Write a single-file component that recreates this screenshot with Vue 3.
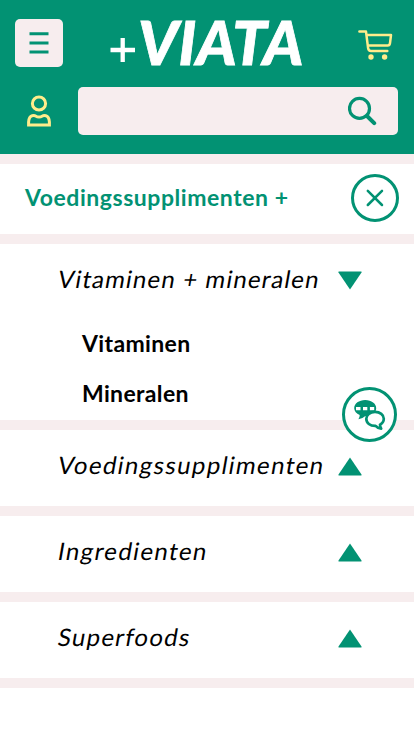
<script setup>
import { ref } from 'vue'

const categories = ref([
  { name: 'Vitaminen + mineralen', slug: 'minerals', open: true, items: ['Vitaminen', 'Mineralen'] },
  { name: 'Voedingssupplimenten', slug: 'supplements', open: false, items: [] },
  { name: 'Ingredienten', slug: 'ingredients', open: false, items: [] },
  { name: 'Superfoods', slug: 'superfoods', open: false, items: [] },
])
</script>

<template>
  <div class="page">
    <header class="header">
      <div class="top-row">
        <button class="menu-button" aria-label="Menu">
          <svg width="20" height="24" viewBox="0 0 20 24">
            <path d="M0.5 2.8h19M0.5 12h19M0.5 21h19" stroke="#029273" stroke-width="3" />
          </svg>
        </button>
        <svg class="logo" width="204" height="82" viewBox="0 -17 204 82">
          <path d="M0.5 31h24.5M12.7 19v24" stroke="#fff" stroke-width="4.3" />
          <text class="logo-text" x="28" y="45.7" textLength="165.5" lengthAdjust="spacingAndGlyphs">VIATA</text>
        </svg>
        <svg class="cart" width="36" height="32" viewBox="0 0 36 32" fill="none" stroke="#ffec8b" stroke-width="2.5" stroke-linecap="round" stroke-linejoin="round">
          <path d="M1.4 2.6H8L10.1 19.2Q10.5 22 13 22H29.3M8.5 6H33L32 14.2Q31.7 16.6 29.6 16.6H10" />
          <circle cx="13" cy="28" r="2.7" fill="#ffec8b" stroke="none" />
          <circle cx="26.6" cy="28" r="2.7" fill="#ffec8b" stroke="none" />
        </svg>
      </div>
      <div class="search-row">
        <svg class="user" width="24" height="32" viewBox="0 0 24 32" fill="none" stroke="#ffec8b" stroke-width="3">
          <circle cx="12" cy="8.5" r="6.6" />
          <path d="M1.6 30.1V27Q2 21.5 5 20.7Q7.2 20 8.6 21Q12 23.2 15.4 21Q16.8 20 19 20.7Q22 21.5 22.4 27V30.1Z" />
        </svg>
        <div class="search-box">
          <svg width="30" height="30" viewBox="0 0 30 30" fill="none" stroke="#029273">
            <circle cx="11.5" cy="12.4" r="10" stroke-width="3.2" />
            <path d="M19 20L26.2 27.2" stroke-width="4" stroke-linecap="round" />
          </svg>
        </div>
      </div>
    </header>

    <main class="list">
      <div class="current">
        <h1 class="current-title">Voedingssupplimenten +</h1>
        <button class="close" aria-label="Sluiten">
          <svg width="18" height="18" viewBox="0 0 18 18">
            <path d="M1.8 1.8L16 16M16 1.8L1.8 16" stroke="#029273" stroke-width="2.5" stroke-linecap="round" />
          </svg>
        </button>
      </div>
      <section v-for="category in categories" :key="category.slug" class="category">
        <div class="category-head" @click="category.open = !category.open">
          <h2 class="category-title" :class="category.slug">{{ category.name }}</h2>
          <svg class="arrow" :class="{ down: category.open }" width="24" height="19" viewBox="0 0 24 19">
            <path d="M12 0.5L23.5 17.6Q23.8 18.5 23.2 18.5H0.8Q0.2 18.5 0.5 17.6Z" fill="#029273" />
          </svg>
        </div>
        <ul v-if="category.open && category.items.length" class="items">
          <li v-for="item in category.items" :key="item">{{ item }}</li>
        </ul>
      </section>
    </main>

    <button class="chat" aria-label="Chat">
      <svg width="32" height="30" viewBox="0 0 32 30">
        <path d="M11.2 0C17.5 0 22.2 3.6 22.2 8.3S17.5 16.2 11 16.2Q8.5 18.7 4.4 19.2Q5.8 17.6 5.7 14.9C2.4 13.5 0.2 11.2 0.2 8.2C0.2 3.6 5 0 11.2 0Z" fill="#029273" />
        <path d="M2 7h4.5v3.2H2zM9 7h4.3v3.2H9zM15.9 7h4.3v3.2h-4.3z" fill="#fff" />
        <path d="M21 11.9C26 11.9 29.8 14.8 29.8 18.8Q29.8 22.6 26 24.6Q26 26.6 27.2 28.6Q23.5 28.2 21.6 25.9C16 26.1 12.3 23 12.3 18.8C12.3 14.8 16 11.9 21 11.9Z" fill="#fff" stroke="#029273" stroke-width="2.7" stroke-linejoin="round" />
      </svg>
    </button>
  </div>
</template>

<style>
body {
  margin: 0;
  background: #fff;
}
</style>

<style scoped>
.page {
  position: relative;
  min-height: 736px;
  background: #fff;
  font-family: Lato, "Open Sans", sans-serif;
  box-sizing: border-box;
}

button {
  display: flex;
  align-items: center;
  justify-content: center;
  padding: 0;
  border: 0;
  box-sizing: border-box;
}

svg {
  display: block;
  flex: none;
}

.header {
  height: 154px;
  padding: 19px 16px 19px 15px;
  box-sizing: border-box;
  background: #029273;
}

.top-row {
  display: flex;
  height: 48px;
}

.menu-button {
  width: 48px;
  height: 48px;
  border-radius: 5px;
  background: #f7edee;
}

.logo {
  margin: -17px 0 0 47px;
}

.logo-text {
  fill: #fff;
  stroke: #fff;
  stroke-width: 0.8px;
  font-size: 61px;
  font-weight: 900;
  font-style: italic;
}

.cart {
  margin: 10px 4px 0 auto;
}

.search-row {
  display: flex;
  align-items: center;
  gap: 27px;
  margin-top: 20px;
  padding-left: 12px;
}

.search-box {
  display: flex;
  flex: 1;
  align-items: center;
  justify-content: flex-end;
  height: 48px;
  padding-right: 20px;
  box-sizing: border-box;
  border-radius: 5px;
  background: #f7edee;
}

.list {
  border-top: 10px solid #f7edee;
}

.current {
  display: flex;
  align-items: center;
  justify-content: space-between;
  height: 80px;
  padding: 0 15px 0 25px;
  box-sizing: border-box;
  border-bottom: 10px solid #f7edee;
}

.current-title {
  margin: 0;
  padding-bottom: 4px;
  color: #029273;
  font-size: 23px;
  font-weight: 700;
  line-height: 30px;
  letter-spacing: 0.55px;
  white-space: nowrap;
}

.close {
  width: 48px;
  height: 48px;
  margin-top: -2px;
  border: 3px solid #029273;
  border-radius: 50%;
  background: #fff;
}

.category {
  border-bottom: 10px solid #f7edee;
}

.category-head {
  display: flex;
  align-items: center;
  justify-content: space-between;
  height: 76px;
  padding: 0 52.5px 4px 56.5px;
  box-sizing: border-box;
}

.category-title {
  margin: 0;
  padding-bottom: 2px;
  color: #000;
  font-size: 24px;
  font-weight: 400;
  line-height: 32px;
  letter-spacing: 1.4px;
  white-space: nowrap;
  transform: skewX(-10deg);
  transform-origin: 0 24px;
}

.category-title.minerals {
  letter-spacing: 1.15px;
}

.category-title.superfoods {
  letter-spacing: 1.25px;
}

.arrow {
  margin-top: 1px;
}

.down {
  margin-top: 0;
  transform: rotate(180deg);
}

.items {
  height: 100px;
  margin: 0;
  padding: 0 0 0 82px;
  list-style: none;
  font-size: 23px;
  font-weight: 700;
  line-height: 46px;
  letter-spacing: 0.35px;
  color: #000;
}

.items li {
  height: 50px;
}

.chat {
  position: absolute;
  left: 342px;
  top: 387px;
  width: 55px;
  height: 55px;
  border: 3px solid #029273;
  border-radius: 50%;
  background: #fff;
}
</style>
